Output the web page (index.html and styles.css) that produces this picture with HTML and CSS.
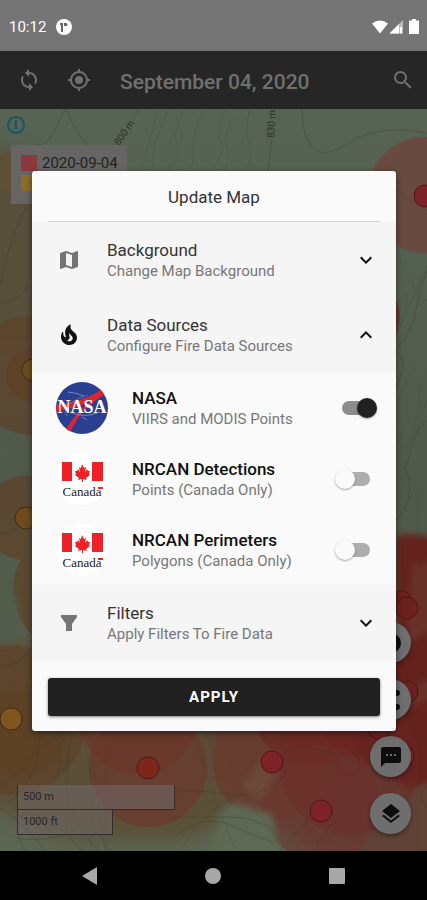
FILE: index.html
```html
<!DOCTYPE html>
<html lang="en">
<head>
<meta charset="utf-8">
<meta name="viewport" content="width=device-width, initial-scale=1">
<title>Update Map</title>
<link rel="stylesheet" href="styles.css">
</head>
<body>
<div class="screen">
  <div class="status">
    <span class="clock">10:12</span>
    <svg width="16" height="16" viewBox="0 0 16 16"><circle cx="8" cy="8" r="8" fill="#fff"/><path d="M4 4h3v9H5V6H4zM8 4h2v3H8z" fill="#666"/><circle cx="10" cy="5.500" r="1.500" fill="#666"/></svg>
    <svg class="signals" width="48" height="16" viewBox="0 0 48 16" fill="#fff"><path d="M0 4.500Q8-1.500 16 4.500L8 14.500z"/><path d="M31 1v13.500H17.500z" opacity=".5"/><path d="M27 5v9.500h-9.500z"/><path d="M28 8h2v6.500h-2z"/><path d="M40 1.500V0h4v1.500h3V15H37V1.500z"/></svg>
  </div>
  <header class="bar">
    <button class="icon" aria-label="Refresh"><svg width="24" height="24" viewBox="0 0 24 24"><path d="M12 4V1L8 5l4 4V6c3.310 0 6 2.690 6 6 0 1.010-.25 1.970-.7 2.800l1.460 1.460A7.930 7.930 0 0 0 20 12c0-4.420-3.580-8-8-8zm0 14c-3.310 0-6-2.690-6-6 0-1.010.25-1.970.7-2.800L5.240 7.740A7.930 7.930 0 0 0 4 12c0 4.420 3.580 8 8 8v3l4-4-4-4v3z"/></svg></button>
    <button class="icon" aria-label="My location"><svg width="24" height="24" viewBox="0 0 24 24"><path d="M12 8a4 4 0 1 0 0 8 4 4 0 0 0 0-8zm8.940 3A8.994 8.994 0 0 0 13 3.060V1h-2v2.060A8.994 8.994 0 0 0 3.060 11H1v2h2.060A8.994 8.994 0 0 0 11 20.940V23h2v-2.060A8.994 8.994 0 0 0 20.940 13H23v-2h-2.060zM12 19a7 7 0 1 1 0-14 7 7 0 0 1 0 14z"/></svg></button>
    <h1>September 04, 2020</h1>
    <button class="icon" aria-label="Search"><svg width="24" height="24" viewBox="0 0 24 24"><path d="M15.500 14h-.79l-.28-.27A6.471 6.471 0 0 0 16 9.500 6.500 6.500 0 1 0 9.500 16c1.610 0 3.090-.59 4.230-1.570l.27.28v.79l5 4.990L20.490 19l-4.990-5zm-6 0a4.500 4.500 0 1 1 0-9 4.500 4.500 0 0 1 0 9z"/></svg></button>
  </header>
  <main class="map">
    <svg class="terrain" viewBox="0 109 427 742" preserveAspectRatio="xMidYMid slice" aria-hidden="true">
      <defs>
        <linearGradient id="land" x1="0" y1="0" x2="0" y2="1"><stop offset="0" stop-color="#576453"/><stop offset=".5" stop-color="#4f594a"/><stop offset="1" stop-color="#5c6653"/></linearGradient>
        <filter id="soft" x="-20%" y="-20%" width="140%" height="140%"><feGaussianBlur stdDeviation="9"/></filter>
        <filter id="edge" x="-20%" y="-20%" width="140%" height="140%"><feGaussianBlur stdDeviation="3"/></filter>
      </defs>
      <path d="M0 109h427v742H0z" fill="url(#land)"/>
      <g filter="url(#soft)">
        <path d="M-20 150h40l60 60v140H-20z" fill="#584f3a"/>
        <path d="M-20 640h230l40 130-20 50-40 20H60L-20 800z" fill="#5b5038"/>
        <path d="M190 700h250v170h-70l-60-20-90-70z" fill="#5f4234"/>
      </g>
      <circle cx="14" cy="172" r="21" fill="#5f5036" opacity=".8"/>
      <g fill="#5d4229" opacity=".75">
        <circle cx="32" cy="375" r="60"/><circle cx="25" cy="518" r="42"/><circle cx="75" cy="590" r="62"/>
        <circle cx="11" cy="720" r="75"/>
      </g>
      <circle cx="32" cy="375" r="26" fill="#5f3b20" opacity=".5"/>
      <circle cx="20" cy="735" r="44" fill="#5b4024" opacity=".6" filter="url(#edge)"/>
      <path d="M0 445l18 4-18 8zM0 565q22 30 18 72L0 645z" fill="#515b4b" filter="url(#edge)"/>
      <circle cx="425" cy="195" r="58" fill="#69493f" opacity=".95"/>
      <path d="M396 300q8 16-1 40z" fill="#67382f"/>
      <g filter="url(#edge)">
        <path d="M396 536q20-4 41 3v240l-27 10-70-40-60-10v-40l116-40z" fill="#63231d"/>
        <path d="M412 560q12 15 25-15v80l-30 20zM390 694l47-18v24l-40 8z" fill="#6b3a30" opacity=".7"/>
      </g>
      <circle cx="148" cy="768" r="59" fill="#693a2e" opacity=".75"/>
      <circle cx="138" cy="714" r="60" fill="#6b3426" opacity=".6"/>
      <circle cx="272" cy="762" r="59" fill="#6a3a2e" opacity=".7"/>
      <circle cx="312" cy="706" r="60" fill="#6c2520" opacity=".65"/>
      <circle cx="321" cy="803" r="59" fill="#6b3530" opacity=".55"/>
      <circle cx="349" cy="764" r="70" fill="#6e2925" opacity=".4"/>
      <path d="M252 774q10-20 28-24-2 26-16 50-16-6-24-15z" fill="#75594c" opacity=".45" filter="url(#edge)"/>
      <path d="M212 851l8-40 18-8q22 10 34 10l6 38z" fill="#5d6a54" opacity=".9" filter="url(#edge)"/>
      <g fill="none" stroke="#303d2c" stroke-opacity=".35">
        <path d="M65 109q-5 9-11 23T35 145M67 109q4 16 20 36M138 109l-5 10M274 109l-1 4M272 139q-2 14-4 32"/>
        <path d="M302 109q0 25 10 38t38-5 77-9M28 202Q9 239 0 287M0 303q15 1 29-18M0 533q12 3 31-16M0 665q12 5 30-14"/>
        <path d="M427 270q-8 20-11 40t-20 40q12 10 5 24l-5 15M427 420q-14 12-16 28t-6 20q10 20-1 42l-8 10"/>
        <path d="M42 748q20-20 18 10t-21 50M55 731q19 14 12 62t17 58M73 732q-13 48-3 76t31 43M0 786q37-25 41-50M10 802q30-28 29-57M17 838q28 5 55-6t36 19M0 808q28 18 45 43M25 851q-14-21 4-51"/>
        <path d="M174 792q30-2 53 2t44-7 12-26 27-14l40 12M174 817q30 0 56 0t46 15M173 838q29-25 57-13t44 18M280 851q15-19 42-41M294 851q10-16 36-37M316 851q0-13 26-37"/>
      </g>
      <g fill="none" stroke="#303d2c" stroke-opacity=".18">
        <path d="M157 109q-4 25-17 62M169 109q-18 35-17 62M185 109q-14 25-8 35t-9 27M204 109q-12 25-11 45t-10 17M225 109q-10 26-4 34t-10 28M235 115q-13 20-8 32t-4 24M250 109q-6 20-1 35t-4 27"/>
        <path d="M400 262l11 16q6 26 16 22M398 330q13-20 7-40M408 310q13-30 19-44M397 445q10-12 3-27t14-52M404 450q15-18 16-66M415 440q8-30 12-40M418 530v-40M80 731q18 47 11 120M88 731q9 55 17 120M115 733q-20 43-5 118M192 731q16 44 19 55t25 65M182 851q15-37 59-57M400 590l10 60M396 190l31 20"/>
      </g>
      <g class="contour" fill="#2b3328"><text x="119" y="146" transform="rotate(-55 119 146)">800 m</text><text x="274" y="138" transform="rotate(-87 274 138)">830 m</text></g>
      <g fill="#6d4b1e" stroke="#42290f"><circle cx="33" cy="370" r="11"/><circle cx="26" cy="518" r="11"/><circle cx="11" cy="719" r="11" fill="#80551f"/></g>
      <g fill="#7c2228" stroke="#4c1719"><circle cx="425" cy="196" r="11"/><circle cx="148" cy="768" r="11" fill="#7f261b"/><circle cx="272" cy="762" r="11"/><circle cx="321" cy="811" r="11"/><circle cx="403" cy="756" r="11"/></g>
      <g fill="#6c2020" stroke="#4c1617"><circle cx="401" cy="602" r="11"/><circle cx="407" cy="608" r="11"/><circle cx="407" cy="692" r="11"/><circle cx="379" cy="728" r="11"/></g>
      <g fill="none" stroke="#6e1c1b"><circle cx="349" cy="764" r="11" opacity=".4"/><circle cx="432" cy="797" r="11" opacity=".4"/></g>
    </svg>
    <svg class="info" width="20" height="20" viewBox="0 0 20 20"><circle cx="10" cy="10" r="8" fill="none" stroke="#12566a" stroke-width="2"/><path d="M9 5h2v2H9zM8 8h3v6H9v-5H8zM8 13h4v1H8z" fill="#12566a"/></svg>
    <div class="legend">
      <div class="key"><i class="swatch red"></i>2020-09-04</div>
      <div class="key"><i class="swatch gold"></i></div>
    </div>
    <div class="scale"><div class="metric">500 m</div><div class="feet">1000 ft</div></div>
    <div class="fabs">
      <button aria-label="Information"><svg width="24" height="24" viewBox="0 0 24 24"><circle cx="12" cy="12" r="10"/></svg></button>
      <button aria-label="Share"><svg width="24" height="24" viewBox="0 0 24 24"><path d="M18 16.080c-.76 0-1.440.3-1.960.77L8.910 12.700a3.300 3.300 0 0 0 0-1.390l7.050-4.110A3 3 0 1 0 15 5c0 .24.040.47.090.7L8.040 9.810a3 3 0 1 0 0 4.380l7.120 4.160A2.920 2.920 0 1 0 18 16.080z"/></svg></button>
      <button aria-label="Comments"><svg width="24" height="24" viewBox="0 0 24 24"><path d="M20 2H4a2 2 0 0 0-2 2v18l4-4h14a2 2 0 0 0 2-2V4a2 2 0 0 0-2-2zM9 11H7V9h2v2zm4 0h-2V9h2v2zm4 0h-2V9h2v2z"/></svg></button>
      <button aria-label="Layers"><svg width="24" height="24" viewBox="0 0 24 24"><path d="M11.990 18.540l-7.370-5.730L3 14.070l9 7 9-7-1.630-1.270-7.380 5.740zM12 16l7.360-5.730L21 9l-9-7-9 7 1.630 1.270L12 16z"/></svg></button>
    </div>
  </main>
  <nav class="system">
    <button aria-label="Back"><svg width="18" height="18" viewBox="0 0 18 18"><path d="M16 0v18L1 9z"/></svg></button>
    <button aria-label="Home"><svg width="18" height="18" viewBox="0 0 18 18"><circle cx="9" cy="9" r="8"/></svg></button>
    <button aria-label="Recent"><svg width="18" height="18" viewBox="0 0 18 18"><rect x="1" y="1" width="16" height="16" rx="1"/></svg></button>
  </nav>

  <div class="overlay">
    <section class="dialog" role="dialog" aria-labelledby="title">
      <h2 id="title">Update Map</h2>
      <button class="panel">
        <svg width="24" height="24" viewBox="0 0 24 24" fill="#757575"><path d="M20.500 3l-.16.030L15 5.100 9 3 3.360 4.900c-.21.070-.36.250-.36.480V20.500c0 .28.220.5.500.5l.16-.03L9 18.900l6 2.100 5.640-1.900c.21-.07.360-.25.360-.48V3.500a.5.500 0 0 0-.5-.5zM15 19l-6-2.110V5l6 2.110V19z"/></svg>
        <span class="copy"><span class="name">Background</span><span class="note">Change Map Background</span></span>
        <svg class="chevron" width="24" height="24" viewBox="0 0 24 24"><path d="M7.410 8.590L12 13.170l4.590-4.580L18 10l-6 6-6-6z"/></svg>
      </button>
      <button class="panel" aria-expanded="true">
        <svg width="24" height="24" viewBox="0 0 24 24" fill="#111"><path d="M19.480 12.350c-1.570-4.080-7.160-4.300-5.810-10.230.1-.44-.37-.78-.75-.55C9.290 3.710 6.680 8 8.870 13.620c.18.460-.36.890-.75.590-1.810-1.370-2-3.340-1.840-4.750.06-.52-.62-.77-.91-.34C4.690 10.160 4 11.840 4 14.370c.38 5.600 5.110 7.320 6.810 7.540 2.430.31 5.060-.14 6.950-1.870 2.080-1.930 2.840-5.010 1.720-7.690zm-9.280 5.030c1.440-.35 2.180-1.390 2.380-2.310.33-1.430-.96-2.830-.09-5.090.33 1.870 3.270 3.040 3.270 5.080.08 2.530-2.660 4.700-5.560 2.320z"/></svg>
        <span class="copy"><span class="name">Data Sources</span><span class="note">Configure Fire Data Sources</span></span>
        <svg class="chevron up" width="24" height="24" viewBox="0 0 24 24"><path d="M7.410 8.590L12 13.170l4.590-4.580L18 10l-6 6-6-6z"/></svg>
      </button>
      <label class="source">
        <svg width="52" height="52" viewBox="0 0 52 52"><clipPath id="disc"><circle cx="26" cy="26" r="26"/></clipPath><g clip-path="url(#disc)"><path d="M0 0h52v52H0z" fill="#2b3f91"/><path d="M0 23Q30 19 46 7l2 6Q30 24 22 36l-8 14-4-3Q20 30 36 18 20 27 0 29z" fill="#dc2530"/><g fill="none" stroke="#a9b4dc"><path d="M12 10q10 1 16 4M26 35l5 3M14 30q14 7 30 0" opacity=".6"/><path d="M11 34Q3 22 32 13" opacity=".4"/></g><text class="nasa" x="26" y="31" text-anchor="middle">NASA</text></g></svg>
        <span class="copy"><span class="name">NASA</span><span class="note">VIIRS and MODIS Points</span></span>
        <input type="checkbox" role="switch" checked>
      </label>
      <label class="source">
        <svg width="52" height="52" viewBox="0 0 52 52"><circle cx="26" cy="26" r="26" fill="#fff"/><path d="M6 9h10v19H6zM36 9h11v19H36z" fill="#ee2028"/><path d="M26 11l2 4 2-1-1 5 2-3 1 2h2l-1 3 1 1-4 3 1 2-4-1v3h-1v-3l-4 1 1-2-4-3 1-1-1-3h2l1-2 2 3-1-5 2 1z" fill="#ee2028"/><text class="canada" x="26" y="43" text-anchor="middle">Canada</text><path d="M42 34h5v2h-5z" fill="#ee2028"/></svg>
        <span class="copy"><span class="name">NRCAN Detections</span><span class="note">Points (Canada Only)</span></span>
        <input type="checkbox" role="switch">
      </label>
      <label class="source">
        <svg width="52" height="52" viewBox="0 0 52 52"><circle cx="26" cy="26" r="26" fill="#fff"/><path d="M6 9h10v19H6zM36 9h11v19H36z" fill="#ee2028"/><path d="M26 11l2 4 2-1-1 5 2-3 1 2h2l-1 3 1 1-4 3 1 2-4-1v3h-1v-3l-4 1 1-2-4-3 1-1-1-3h2l1-2 2 3-1-5 2 1z" fill="#ee2028"/><text class="canada" x="26" y="43" text-anchor="middle">Canada</text><path d="M42 34h5v2h-5z" fill="#ee2028"/></svg>
        <span class="copy"><span class="name">NRCAN Perimeters</span><span class="note">Polygons (Canada Only)</span></span>
        <input type="checkbox" role="switch">
      </label>
      <button class="panel">
        <svg width="24" height="24" viewBox="0 0 24 24" fill="#757575"><path d="M4 4h16v2l-5 7v7H9v-7L4 6z"/></svg>
        <span class="copy"><span class="name">Filters</span><span class="note">Apply Filters To Fire Data</span></span>
        <svg class="chevron" width="24" height="24" viewBox="0 0 24 24"><path d="M7.410 8.590L12 13.170l4.590-4.580L18 10l-6 6-6-6z"/></svg>
      </button>
      <button class="apply">APPLY</button>
    </section>
  </div>
</div>
</body>
</html>
```
FILE: styles.css
```css
* { box-sizing: border-box; }
body { margin: 0; font-family: Roboto, "Liberation Sans", sans-serif; }
button { border: 0; padding: 0; font: inherit; color: inherit; background: none; cursor: pointer; }
svg { display: block; flex: none; }

.screen { position: relative; display: flex; flex-direction: column; min-height: 100vh; }

.status { display: flex; align-items: center; gap: 10px; height: 51px; padding: 2px 7px 0 9px; background: #757575; color: #fff; }
.clock { font-size: 15px; line-height: 20px; }
.signals { margin-left: auto; }

.bar { display: flex; align-items: center; height: 58px; padding: 0 12px 0 17px; background: #262626; color: #707070; }
.icon svg { fill: currentColor; }
.icon + .icon { margin-left: 26px; }
.bar h1 { flex: 1; margin: 0 0 0 29px; padding-top: 3px; font-size: 21px; line-height: 28px; font-weight: 500; }

.map { position: relative; flex: 1; display: flex; flex-direction: column; align-items: flex-start; padding: 6px 17px 16px 6px; overflow: hidden; background: #566353; }
.terrain { position: absolute; inset: 0; width: 100%; height: 100%; }
.contour { font-size: 10px; }
.info, .legend { position: relative; }
.legend { display: grid; gap: 4px; margin: 10px 0 0 5px; padding: 10px 10px 13px; width: 116px; background: #666564; color: #222; font-size: 15px; }
.key { display: flex; align-items: center; gap: 5px; height: 16px; line-height: 20px; white-space: nowrap; }
.swatch { flex: none; width: 16px; height: 16px; }
.red { background: #8c393b; }
.gold { background: #8c6b2b; }
.scale { position: relative; margin: auto 0 0 11px; font-size: 11px; line-height: 24px; color: #2a2523; }
.metric, .feet { border: 1px solid #302d29; border-top: 0; padding-left: 5px; background: rgba(110, 104, 102, .6); }
.metric { width: 158px; }
.feet { width: 96px; }
.fabs { position: absolute; right: 16px; bottom: 17px; display: grid; gap: 16px; }
.fabs button { display: grid; place-items: center; width: 41px; height: 41px; border-radius: 50%; background: #6e6e6e; box-shadow: 0 2px 4px rgba(0, 0, 0, .4); }
.fabs svg { fill: #0d0d0d; }

.system { display: grid; grid-template-columns: repeat(3, 1fr); place-items: center; height: 49px; padding: 0 28px; background: #000; }
.system svg { fill: #a8a8a8; }

.overlay { position: absolute; inset: 0; display: grid; align-items: center; padding: 2px 31px 0 32px; }
.dialog { display: flex; flex-direction: column; padding-bottom: 15px; border-radius: 3px; background: #fafafa; box-shadow: 0 2px 6px rgba(0, 0, 0, .5); }
.dialog h2 { margin: 0 16px; padding: 14px 0 11px; border-bottom: 1px solid #d0d0d0; font-size: 17px; line-height: 25px; font-weight: 400; text-align: center; color: #333; }
.panel { display: flex; align-items: center; gap: 26px; height: 75px; padding: 0 18px 0 25px; text-align: left; background: #f5f5f5; }
.source { display: flex; align-items: center; gap: 24px; height: 71px; padding: 0 19px 0 24px; cursor: pointer; }
.copy { flex: 1; min-width: 0; padding-top: 2px; }
.name, .note { display: block; line-height: 21px; white-space: nowrap; }
.name { font-size: 17px; color: #333; }
.note { font-size: 15px; color: #777; }
.source .name { font-weight: 500; color: #111; }
.chevron { fill: #111; }
.up { transform: rotate(180deg); }
.nasa { font: 700 18px "Liberation Serif", serif; fill: #fff; }
.canada { font: 13px "Liberation Serif", serif; fill: #222; }

.source input { position: relative; flex: none; appearance: none; width: 42px; height: 20px; margin: 0; cursor: pointer; }
.source input::before { content: ""; position: absolute; inset: 3px 7px; border-radius: 7px; background: #adadad; }
.source input::after { content: ""; position: absolute; left: 0; top: 0; width: 20px; height: 20px; border-radius: 50%; background: #fafafa; box-shadow: 0 1px 2px rgba(0, 0, 0, .35); }
.source input:checked::before { background: #8c8c8c; }
.source input:checked::after { left: 22px; background: #212121; }

.apply { height: 38px; margin: 18px 16px 0; border-radius: 3px; background: #212121; color: #fff; font-size: 15px; font-weight: 700; letter-spacing: 1px; box-shadow: 0 1px 3px rgba(0, 0, 0, .5); }
```
